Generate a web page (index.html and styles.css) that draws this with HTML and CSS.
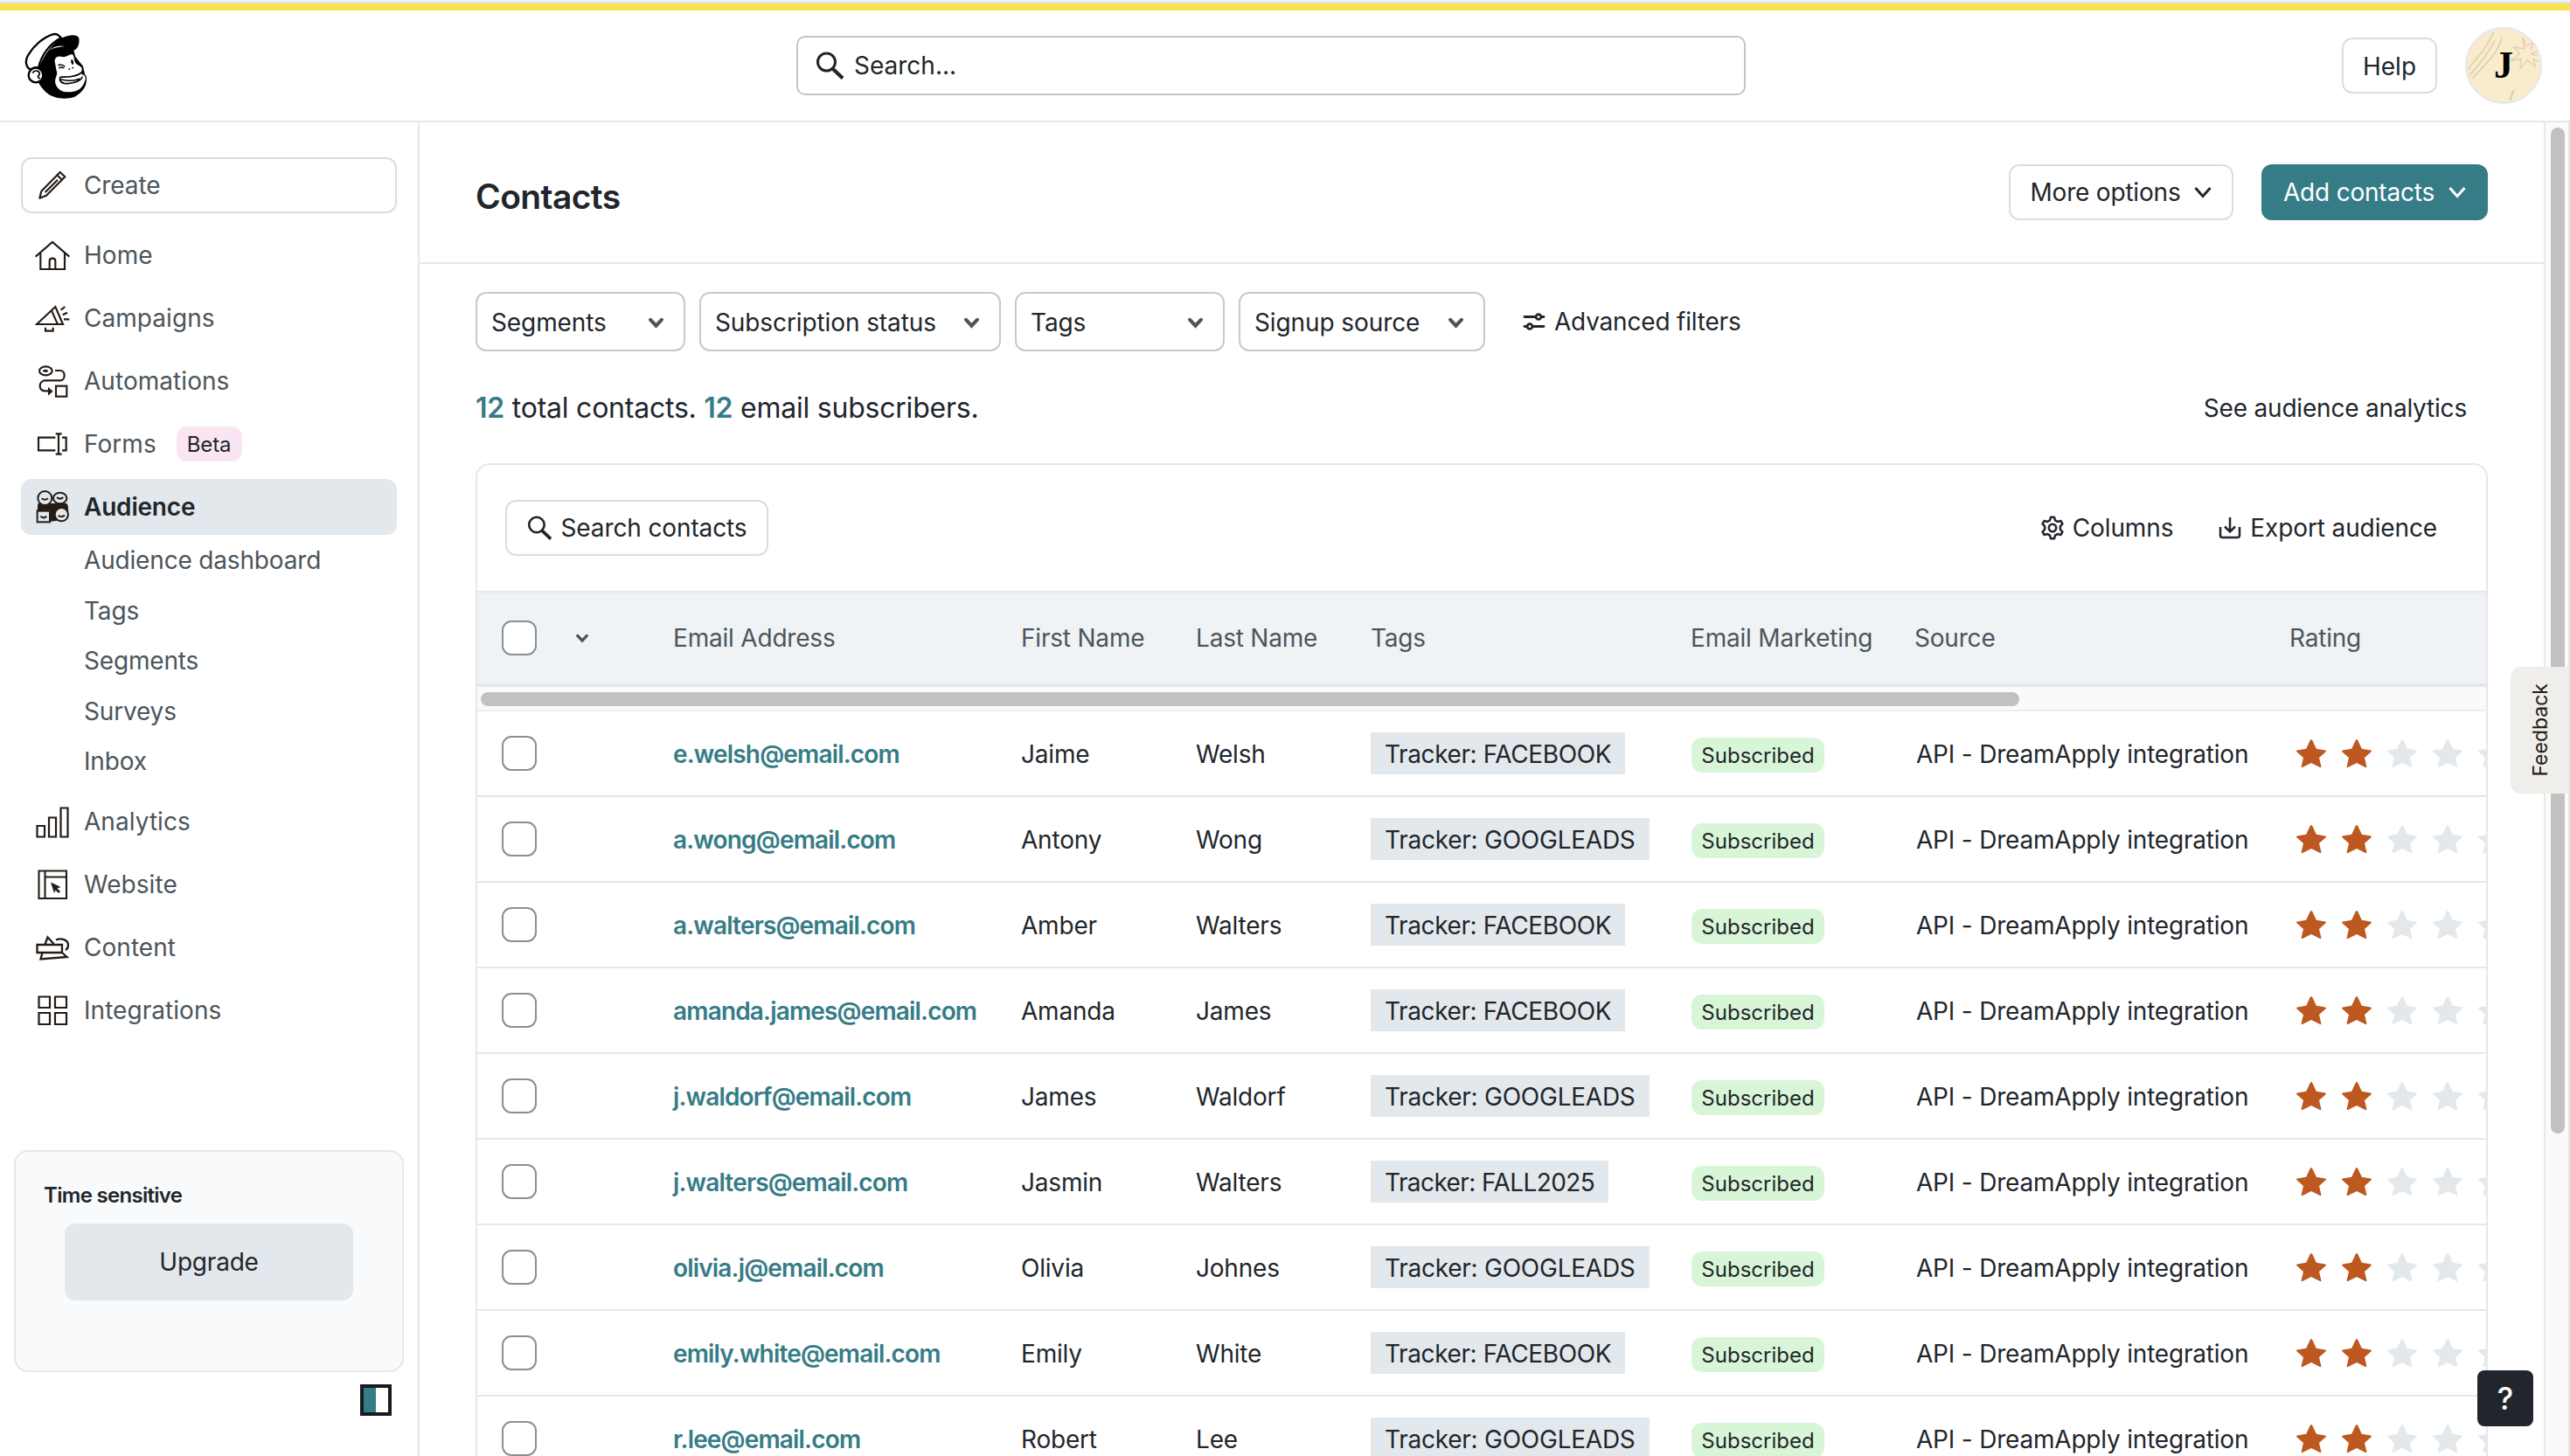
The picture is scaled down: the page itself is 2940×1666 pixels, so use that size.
FILE: index.html
```html
<!DOCTYPE html>
<html lang="en">
<head>
<meta charset="utf-8">
<title>Contacts</title>
<link rel="stylesheet" href="styles.css">
</head>
<body>
<svg class="defs" width="0" height="0" aria-hidden="true">
  <symbol id="chev-thin" viewBox="0 0 20 14"><path d="M1.5 2 L10 11.5 L18.5 2" fill="none" stroke="currentColor" stroke-width="3"/></symbol>
  <symbol id="chev" viewBox="0 0 16 12"><path d="M2 2.5 L8 9 L14 2.5" fill="none" stroke="currentColor" stroke-width="3.8" stroke-linecap="round"/></symbol>
  <symbol id="search" viewBox="0 0 32 32"><circle cx="12.5" cy="12" r="10" fill="none" stroke="currentColor" stroke-width="3"/><path d="M19.5 19.5 L31 30.5" stroke="currentColor" stroke-width="4.2"/></symbol>
  <symbol id="rating" viewBox="0 0 242 34">
    <g fill="#bd5820"><path id="star" d="M17 1 Q18 1 18.5 2.5 L22.8 11.8 L33 13.4 Q34.6 14 33.6 15.2 L26 22 L28.4 32 Q28.4 33.6 27 33 L17 28 L7 33 Q5.6 33.6 5.6 32 L8 22 L.4 15.2 Q-.6 14 1 13.4 L11.2 11.8 L15.5 2.5 Q16 1 17 1 Z"/><use href="#star" x="52"/></g>
    <g fill="#e3e8ec"><path d="M121 1 Q122 1 122.5 2.5 L126.8 11.8 L137 13.4 Q138.6 14 137.6 15.2 L130 22 L132.4 32 Q132.4 33.6 131 33 L121 28 L111 33 Q109.6 33.6 109.6 32 L112 22 L104.4 15.2 Q103.4 14 105 13.4 L115.2 11.8 L119.5 2.5 Q120 1 121 1 Z" id="star-off"/><use href="#star-off" x="52"/><use href="#star-off" x="104"/></g>
  </symbol>
</svg>

<div class="top-strip"></div>
<header class="topbar">
  <svg class="logo" viewBox="0 0 270 276">
    <path d="M72 150 C84 118 108 72 148 46 C175 32 205 29 211 44 C214 62 207 82 193 86 L199 108 L225 140 L236 190 C238 212 216 236 195 246 C165 256 120 252 96 228 C84 216 76 206 72 195 Z" fill="#000"/>
    <path d="M46 152 C30 146 23 124 38 100 C56 70 88 42 120 31 C136 27 142 34 150 43 C112 62 82 100 72 146 C64 143 52 144 46 152 Z" fill="#fff" stroke="#000" stroke-width="7" stroke-linejoin="round"/>
    <circle cx="63" cy="171" r="25" fill="#fff" stroke="#000" stroke-width="7"/>
    <path d="M52 164 C56 154 74 152 76 166 C77 172 67 172 71 178 L77 183" fill="none" stroke="#000" stroke-width="5"/>
    <path d="M108 87 C122 73 145 66 166 74 C150 70 140 76 130 77 C120 79 114 83 108 87 Z" fill="#fff"/>
    <path d="M127 130 C122 112 134 101 154 106 C168 109 174 98 187 97 C198 97 194 116 200 127 C205 135 218 136 222 145 C226 155 219 160 222 166 C236 170 240 184 231 197 C222 222 196 232 168 231 C146 230 127 213 127 190 C128 176 138 168 132 157 Z" fill="#fff" stroke="#000" stroke-width="4"/>
    <path d="M139 137 Q151 131 163 142 M142 147 Q150 141 160 147" fill="none" stroke="#000" stroke-width="4"/>
    <ellipse cx="188" cy="126" rx="4" ry="9" fill="#000" transform="rotate(-12 188 126)"/>
    <circle cx="178" cy="150" r="2.7"/><circle cx="190" cy="146" r="2.7"/>
    <path d="M222 160 C208 174 176 178 150 177 C142 178 144 196 160 199 C190 203 218 190 222 178 M150 186 C172 191 198 190 212 184" fill="none" stroke="#000" stroke-width="5" stroke-linecap="round"/>
  </svg>
  <div class="global-search"><svg class="i32"><use href="#search"/></svg><span>Search...</span></div>
  <div class="top-actions">
    <button class="btn help">Help</button>
    <div class="avatar">
      <svg viewBox="0 0 264 264"><g fill="none" stroke="#dccfb0" stroke-width="5"><path d="M96 12 C70 70 45 95 4 145 M101 42 C70 100 40 135 10 166 M127 30 C105 105 50 140 20 178"/><path d="M200 30 L214 62 L238 48 L230 78 M256 80 L232 90 L252 96 M258 118 L240 108 L246 136 L218 112 L192 142 L194 108 L158 116 L190 88 L168 66 L206 72 L200 30" stroke-width="4"/><path d="M170 220 Q162 232 156 256" stroke-width="7"/></g></svg>
      <span>J</span>
    </div>
  </div>
</header>

<div class="body">
<aside class="sidebar">
  <nav class="nav">
    <a class="item create"><svg class="ico" viewBox="12 36 120 120"><g fill="none" stroke="#241c15" stroke-width="6.5" stroke-linejoin="round"><path d="M28 140 L34 116 L98 51 L115 67 L51 131 Z M87 60 L105 77 M47 120 L90 77"/></g></svg><span>Create</span></a>
    <a class="item"><svg class="ico" viewBox="12 276 120 120"><path d="M14 341 L72 291 L130 341 M31 329 V384 H114 V329 M62 384 V356 Q62 347 72 347 Q82 347 82 356 V384" fill="none" stroke="#241c15" stroke-width="6.5"/></svg><span>Home</span></a>
    <a class="item"><svg class="ico" viewBox="12 492 120 120"><path d="M18 573 L82 513 L108 573 Z M69 526 L89 571 M48 584 V596 H74 V584 M101 524 L115 513 M107 541 L123 533 M111 556 H130" fill="none" stroke="#241c15" stroke-width="6.5"/></svg><span>Campaigns</span></a>
    <a class="item"><svg class="ico" viewBox="12 708 120 120"><g fill="none" stroke="#241c15" stroke-width="6.5"><ellipse cx="49" cy="733" rx="22" ry="15"/><path d="M81 732 H98 C118 732 118 766 98 766 H48 C24 766 22 802 46 802 H60"/><rect x="84" y="785" width="37" height="36"/></g><path d="M57 788 L74 803 L57 818 Z" fill="#241c15"/><ellipse cx="48" cy="733" rx="9" ry="5" fill="#241c15"/></svg><span>Automations</span></a>
    <a class="item"><svg class="ico" viewBox="12 924 120 120"><path d="M82 962 H24 V1006 H82 M105 962 H119 V1006 H105 M93 950 V1018 M83 949 H104 M83 1019 H104" fill="none" stroke="#241c15" stroke-width="6.5"/></svg><span>Forms</span><em class="beta">Beta</em></a>
    <a class="item active"><svg class="ico" viewBox="12 1140 120 120"><path d="M22 1188 H120 Q128 1190 126 1230 L112 1244 L66 1250 L18 1240 Z" fill="#241c15"/><g fill="#e3e8ec" stroke="#241c15" stroke-width="6"><circle cx="46" cy="1170" r="24"/><ellipse cx="98" cy="1170" rx="23" ry="19"/><rect x="20" y="1214" width="43" height="38"/><circle cx="103" cy="1226" r="23"/><path d="M35 1171 Q46 1180 57 1171 M87 1167 Q98 1177 109 1167 M31 1232 Q41 1242 52 1232 M92 1229 Q102 1238 114 1229" fill="none"/></g></svg><span>Audience</span></a>
    <div class="subnav"><a>Audience dashboard</a><a>Tags</a><a>Segments</a><a>Surveys</a><a>Inbox</a></div>
    <a class="item"><svg class="ico" viewBox="0 0 40 40"><path d="M2.5 25 H11 V37.5 H2.5 Z M16 15.5 H24 V37.5 H16 Z M29.5 4.5 H37.5 V37.5 H29.5 Z" fill="none" stroke="#241c15" stroke-width="2.2"/></svg><span>Analytics</span></a>
    <a class="item"><svg class="ico" viewBox="0 0 40 40"><path d="M4.5 4.5 H36 V36 H4.5 Z M11.5 4.5 V36 M11.5 11.5 H36" fill="none" stroke="#241c15" stroke-width="2.1"/><path d="M18 17.5 L29.5 23 L25.5 24.5 L29 28 L27 30 L23.5 26.5 L22 30 Z" fill="#241c15"/></svg><span>Website</span></a>
    <a class="item"><svg class="ico" viewBox="0 0 40 40"><path d="M2.5 17 H31 V26 H2.5 Z M11.5 16.5 L14.5 8.5 L21.5 16 M24 11.5 C30 9 38 11 38 17.5 C38 20 37 22 35 23 M8.5 26 L6.5 33.5 L36.5 31 L31 26" fill="none" stroke="#241c15" stroke-width="2.3"/></svg><span>Content</span></a>
    <a class="item"><svg class="ico" viewBox="0 0 40 40"><path d="M4.5 4.5 H17 V17 H4.5 Z M23 4.5 H36 V17 H23 Z M4.5 23 H17 V36 H4.5 Z M23 23 H36 V36 H23 Z" fill="none" stroke="#241c15" stroke-width="2.2"/></svg><span>Integrations</span></a>
  </nav>
  <div class="promo"><strong>Time sensitive</strong><button>Upgrade</button></div>
  <div class="collapse"><i></i></div>
</aside>

<main class="main">
  <div class="page-head">
    <h1>Contacts</h1>
    <button class="btn more">More options<svg class="c20"><use href="#chev-thin"/></svg></button>
    <button class="btn add">Add contacts<svg class="c20"><use href="#chev-thin"/></svg></button>
  </div>
  <div class="content">
    <div class="filters">
      <div class="select s1">Segments<svg class="c16"><use href="#chev"/></svg></div>
      <div class="select s2">Subscription status<svg class="c16"><use href="#chev"/></svg></div>
      <div class="select s3">Tags<svg class="c16"><use href="#chev"/></svg></div>
      <div class="select s4">Signup source<svg class="c16"><use href="#chev"/></svg></div>
      <a class="advanced"><svg viewBox="0 0 26 20"><g fill="none" stroke="currentColor" stroke-width="2.8" stroke-linecap="round"><path d="M2 4.5 H14 M22 4.5 H24 M2 15.5 H4 M12 15.5 H24"/><circle cx="18" cy="4.5" r="2.9"/><circle cx="8" cy="15.5" r="2.9"/></g></svg><span>Advanced filters</span></a>
    </div>
    <div class="summary"><p><b>12</b> total contacts. <b>12</b> email subscribers.</p><a>See audience analytics</a></div>

    <section class="card">
      <div class="toolbar">
        <button class="btn find"><svg class="i28"><use href="#search"/></svg><span>Search contacts</span></button>
        <a class="tool cols"><svg viewBox="0 0 24 24"><g fill="none" stroke="currentColor" stroke-width="2.2" stroke-linejoin="round"><circle cx="12" cy="12" r="3.6"/><path d="M10.3 1.5 h3.4 l.9 3.1 2.3 1.3 3.1-.8 1.8 3 -2.2 2.4 v3 l2.2 2.4 -1.8 3 -3.1-.8 -2.3 1.3 -.9 3.1 h-3.4 l-.9-3.1 -2.3-1.3 -3.1.8 -1.8-3 2.2-2.4 v-3 l-2.2-2.4 1.8-3 3.1.8 2.3-1.3 z"/></g></svg><span>Columns</span></a>
        <a class="tool export"><svg viewBox="0 0 28 28"><path d="M3 13 V22.5 Q3 25 5.5 25 H22.5 Q25 25 25 22.5 V13 M14 2 V18 M8 12.5 L14 18.5 L20 12.5" fill="none" stroke="currentColor" stroke-width="2.5"/></svg><span>Export audience</span></a>
      </div>
      <div class="row head">
        <div class="sel"><i class="check"></i><svg class="c14"><use href="#chev"/></svg></div>
        <span>Email Address</span><span>First Name</span><span>Last Name</span><span>Tags</span><span>Email Marketing</span><span>Source</span><span>Rating</span>
      </div>
      <div class="hscroll"><i></i></div>
      <div class="row"><div class="sel"><i class="check"></i></div><a>e.welsh@email.com</a><span>Jaime</span><span>Welsh</span><span><em class="tag">Tracker: FACEBOOK</em></span><span><em class="badge">Subscribed</em></span><span class="src">API - DreamApply integration</span><svg class="stars"><use href="#rating"/></svg></div>
      <div class="row"><div class="sel"><i class="check"></i></div><a>a.wong@email.com</a><span>Antony</span><span>Wong</span><span><em class="tag wide">Tracker: GOOGLEADS</em></span><span><em class="badge">Subscribed</em></span><span class="src">API - DreamApply integration</span><svg class="stars"><use href="#rating"/></svg></div>
      <div class="row"><div class="sel"><i class="check"></i></div><a>a.walters@email.com</a><span>Amber</span><span>Walters</span><span><em class="tag">Tracker: FACEBOOK</em></span><span><em class="badge">Subscribed</em></span><span class="src">API - DreamApply integration</span><svg class="stars"><use href="#rating"/></svg></div>
      <div class="row"><div class="sel"><i class="check"></i></div><a>amanda.james@email.com</a><span>Amanda</span><span>James</span><span><em class="tag">Tracker: FACEBOOK</em></span><span><em class="badge">Subscribed</em></span><span class="src">API - DreamApply integration</span><svg class="stars"><use href="#rating"/></svg></div>
      <div class="row"><div class="sel"><i class="check"></i></div><a>j.waldorf@email.com</a><span>James</span><span>Waldorf</span><span><em class="tag wide">Tracker: GOOGLEADS</em></span><span><em class="badge">Subscribed</em></span><span class="src">API - DreamApply integration</span><svg class="stars"><use href="#rating"/></svg></div>
      <div class="row"><div class="sel"><i class="check"></i></div><a>j.walters@email.com</a><span>Jasmin</span><span>Walters</span><span><em class="tag narrow">Tracker: FALL2025</em></span><span><em class="badge">Subscribed</em></span><span class="src">API - DreamApply integration</span><svg class="stars"><use href="#rating"/></svg></div>
      <div class="row"><div class="sel"><i class="check"></i></div><a>olivia.j@email.com</a><span>Olivia</span><span>Johnes</span><span><em class="tag wide">Tracker: GOOGLEADS</em></span><span><em class="badge">Subscribed</em></span><span class="src">API - DreamApply integration</span><svg class="stars"><use href="#rating"/></svg></div>
      <div class="row"><div class="sel"><i class="check"></i></div><a>emily.white@email.com</a><span>Emily</span><span>White</span><span><em class="tag">Tracker: FACEBOOK</em></span><span><em class="badge">Subscribed</em></span><span class="src">API - DreamApply integration</span><svg class="stars"><use href="#rating"/></svg></div>
      <div class="row"><div class="sel"><i class="check"></i></div><a>r.lee@email.com</a><span>Robert</span><span>Lee</span><span><em class="tag wide">Tracker: GOOGLEADS</em></span><span><em class="badge">Subscribed</em></span><span class="src">API - DreamApply integration</span><svg class="stars"><use href="#rating"/></svg></div>
    </section>
  </div>
</main>
<div class="vscroll"><i></i></div>
</div>

<div class="feedback"><span>Feedback</span></div>
<div class="help-fab">?</div>
</body>
</html>
```
FILE: styles.css
```css
* { box-sizing: border-box; margin: 0; padding: 0; }
html, body { width: 2940px; height: 1666px; overflow: hidden; }
body {
  display: flex; flex-direction: column; position: relative;
  background: #fff; color: #21262c;
  font-family: Inter, "Liberation Sans", sans-serif; font-size: 28px; line-height: 40px; letter-spacing: -.2px;
}
button { letter-spacing: inherit; }
svg { flex: none; display: block; }
em, i { font-style: normal; }
.defs { position: absolute; }
span, a, em, p { white-space: nowrap; }

.top-strip { flex: none; height: 12px; background: linear-gradient(#f0f5f7 0 2px, #dbe4e6 2px 4px, #fae152 4px); }
.topbar {
  flex: none; height: 128px; display: grid; grid-template-columns: 911px 1086px 1fr; align-items: center;
  border-bottom: 2px solid #e3e8ec;
}
.logo { width: 90px; height: 92px; margin-left: 20px; }
.global-search {
  height: 68px; border: 2px solid #bfc5c9; border-radius: 10px; display: flex; align-items: center;
  gap: 12px; padding-left: 20px; letter-spacing: 0;
}
.i32 { width: 32px; height: 32px; }
.i28 { width: 28px; height: 28px; }
.top-actions { display: flex; justify-content: flex-end; align-items: center; gap: 32px; padding-right: 32px; }
.btn {
  font: inherit; color: inherit; height: 64px; background: #fff; border: 2px solid #d7dee3; border-radius: 12px;
  display: flex; align-items: center; justify-content: center; white-space: nowrap;
}
.help { width: 109px; border-color: #dcdddf; padding-top: 2px; letter-spacing: 0; }
.avatar {
  width: 88px; height: 88px; border-radius: 50%; background: #f8eccd; border: 2px solid #e3e8ec; overflow: hidden;
  display: grid; place-items: center;
}
.avatar > * { grid-area: 1 / 1; }
.avatar svg { width: 84px; height: 84px; }
.avatar span { font: bold 44px/44px "Liberation Serif", serif; color: #000; }

.body { flex: 1; min-height: 0; display: flex; }
.sidebar { width: 480px; border-right: 2px solid #e3e8ec; display: flex; flex-direction: column; padding-top: 40px; }
.nav { display: flex; flex-direction: column; gap: 8px; padding: 0 24px; color: #4c555b; letter-spacing: .05px; }
.item { height: 64px; border-radius: 12px; display: flex; align-items: center; padding-left: 16px; }
.ico { width: 40px; height: 40px; margin-right: 16px; }
.create { border: 2px solid #d7dee3; padding-left: 14px; margin-bottom: 8px; letter-spacing: -.1px; }
.active { background: #e3e8ec; color: #21262c; font-weight: 600; letter-spacing: -.2px; }
.beta { margin-left: 23px; height: 40px; line-height: 41px; padding: 0 12px; background: #fae5f2; border-radius: 12px; color: #21262c; font-size: 24px; letter-spacing: -.1px; }
.subnav { display: flex; flex-direction: column; margin-top: -8px; padding-left: 72px; letter-spacing: -.17px; }
.subnav a { height: 57.5px; line-height: 59px; }
.promo {
  margin: 128px 16px 0; width: 446px; height: 254px; border: 2px solid #e3e8ec; border-radius: 16px; background: #f9fafc;
  display: flex; flex-direction: column; padding: 30px 56px 0;
}
.promo strong { font-size: 24px; font-weight: 600; margin-left: -24px; letter-spacing: -.7px; }
.promo button { margin-top: 12px; height: 88px; border: 0; border-radius: 12px; background: #e3e8ec; font: inherit; color: inherit; }
.collapse { width: 36px; height: 36px; border: 4px solid #171b20; margin: 14px 0 0 412px; }
.collapse i { display: block; width: 14px; height: 28px; background: #367c86; }

.main { flex: 1; min-width: 0; display: flex; flex-direction: column; }
.page-head { flex: none; height: 162px; border-bottom: 2px solid #e3e8ec; display: flex; align-items: flex-start; padding: 48px 64px 0 64px; }
h1 { font-size: 39px; font-weight: 600; line-height: 48px; letter-spacing: -.6px; margin: 13px auto 0 0; }
.more { width: 257px; }
.add { width: 259px; margin-left: 32px; background: #367c86; border-color: #367c86; color: #fff; }
.c20 { width: 20px; height: 14px; margin-left: 16px; }
.c16 { width: 17px; height: 13px; color: #4c555b; }
.c14 { width: 14px; height: 11px; }
.content { flex: 1; min-height: 0; padding: 32px 64px 0; display: flex; flex-direction: column; }
.filters { display: flex; gap: 16px; height: 68px; flex: none; letter-spacing: -.1px; }
.select { border: 2px solid #c1cbd4; border-radius: 12px; display: flex; align-items: center; justify-content: space-between; padding: 2px 23px 0 16px; white-space: nowrap; }
.s1, .s3 { width: 240px; } .s2 { width: 345px; } .s4 { width: 282px; }
.advanced { display: flex; align-items: center; gap: 10px; margin-left: 27px; letter-spacing: -.2px; }
.advanced svg { width: 26px; height: 20px; }
.summary { flex: none; display: flex; justify-content: space-between; height: 128px; padding: 45px 24px 0 0; }
.summary p { font-size: 32px; letter-spacing: -.23px; }
.summary b { color: #367c86; font-weight: 600; }

.card { flex: none; border: 2px solid #e3e8ec; border-bottom: 0; border-radius: 16px 16px 0 0; overflow: hidden; }
.toolbar { height: 144px; display: flex; align-items: center; padding: 0 56px 0 32px; }
.find { width: 301px; gap: 11px; margin-right: auto; letter-spacing: -.12px; }
.tool { display: flex; align-items: center; gap: 9px; letter-spacing: -.12px; }
.tool svg { width: 28px; height: 28px; }
.cols { margin-right: 51px; }
.row {
  height: 98px; display: grid; grid-template-columns: 224px 398px 200px 200px 366px 256px 429px 300px; align-items: center;
  border-bottom: 2px solid #e3e8ec;
}
.row > span, .row > a { padding-top: 2px; }
.row > span:has(em), .head > span { padding-top: 0; }
.row a { color: #367c86; font-weight: 600; letter-spacing: -.83px; }
.head { height: 110px; background: #eff3f6; border-top: 2px solid #e3e8ec; border-bottom-width: 4px; color: #4c555b; }
.sel { display: flex; align-items: center; gap: 45px; padding-left: 28px; }
.check { width: 40px; height: 40px; border: 2px solid #84919a; border-radius: 11px; background: #fff; }
.hscroll { height: 28px; margin: 0 -2px; background: #fafafa; border-bottom: 2px solid #ededed; padding: 6px 0 0 6px; }
.hscroll i { display: block; width: 1760px; height: 16px; border-radius: 8px; background: #c1c1c1; }
.tag { display: inline-block; height: 48px; line-height: 50px; padding: 0 16px; background: #e3e8ec; letter-spacing: -.4px; }
.wide { letter-spacing: -.25px; }
.narrow { letter-spacing: -.58px; }
.badge { display: block; width: 152px; height: 40px; line-height: 41px; margin: 4px 0 0 1px; text-align: center; border-radius: 12px; background: #d9f5d7; font-size: 24px; letter-spacing: 0; }
.row > .src { padding-left: 2px; }
.stars { width: 242px; height: 34px; margin-left: 8px; }

.vscroll { width: 30px; background: #fafafa; border: solid #e8e8e8; border-width: 0 2px; padding: 6px 0 0 6px; }
.vscroll i { display: block; width: 16px; height: 1151px; border-radius: 8px; background: #c1c1c1; }
.feedback {
  position: absolute; right: 2px; top: 763px; width: 66px; height: 145px; background: #efeeea; border-radius: 12px 0 0 12px;
  display: flex; align-items: center; justify-content: center; color: #241c15; font-size: 23px; letter-spacing: 0; padding-left: 2px;
}
.feedback span { writing-mode: vertical-rl; transform: rotate(180deg); }
.help-fab {
  position: absolute; left: 2834px; top: 1568px; width: 64px; height: 64px; border-radius: 8px; background: #21262c;
  color: #fff; font-size: 35px; font-weight: 500; line-height: 64px; text-align: center;
}
```
